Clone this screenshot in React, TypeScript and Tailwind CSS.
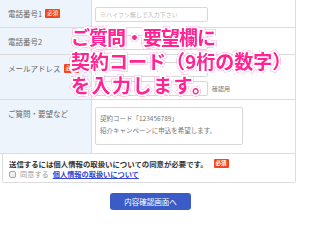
const font = { fontFamily: '"Noto Sans CJK JP", "Noto Sans", sans-serif' };

function Badge() {
  return (
    <span className="inline-flex h-[9px] items-center rounded-[1px] bg-[#f0451e] px-[2px] text-[5.5px] leading-none text-white">
      必須
    </span>
  );
}

function Row({ label, badge, h, children }: { label: string; badge?: boolean; h: string; children?: React.ReactNode }) {
  return (
    <div className={`flex border-b border-[#dcdcdc] ${h}`}>
      <div className="w-[92px] shrink-0 border-r border-[#dcdcdc] bg-[#eef4fb] pl-[8px] pt-[9px]">
        <div className="flex items-center gap-[3px] text-[7.5px] leading-[9px] text-[#666]">
          <span>{label}</span>
          {badge && <Badge />}
        </div>
      </div>
      <div className="flex-1 pl-[3px] pt-[7px]">{children}</div>
    </div>
  );
}

export default function App() {
  return (
    <div className="relative h-[220px] w-[300px] overflow-hidden bg-white" style={font}>
      <div className="w-[296px] border-r border-[#dcdcdc]">
        <Row label="電話番号1" badge h="h-[28px]">
          <div className="flex h-[15px] w-[113px] items-center rounded-[2px] border border-[#d8d8d8] pl-[4px] text-[6px] text-[#bbb]">
            ※ハイフン無しで入力下さい
          </div>
        </Row>
        <Row label="電話番号2" h="h-[27px]">
          <div className="h-[15px] w-[113px] rounded-[2px] border border-[#d8d8d8]" />
        </Row>
        <Row label="メールアドレス" badge h="h-[45px]">
          <div className="flex flex-col gap-[4px]">
            <div className="h-[15px] w-[113px] rounded-[2px] border border-[#d8d8d8]" />
            <div className="flex items-center gap-[4px]">
              <div className="h-[15px] w-[113px] rounded-[2px] border border-[#d8d8d8]" />
              <span className="text-[6px] text-[#777]">確認用</span>
            </div>
          </div>
        </Row>
        <Row label="ご質問・要望など" h="h-[54px]">
          <div className="h-[38px] w-[148px] rounded-[2px] border border-[#d8d8d8] pl-[4px] pt-[4px] text-[6.5px] leading-[12px] text-[#777]">
            <div>契約コード「123456789」</div>
            <div>紹介キャンペーンに申込を希望します。</div>
          </div>
        </Row>
      </div>
      <div className="ml-[2px] h-[29px] w-[294px] rounded-b-[2px] border border-t-0 border-[#dcdcdc] pl-[6px] pt-[4px]">
        <div className="flex items-center gap-[6px] text-[7.4px] font-bold leading-[11px] text-[#333]">
          <span>送信するには個人情報の取扱いについての同意が必要です。</span>
          <Badge />
        </div>
        <div className="flex items-center gap-[4px] text-[7.2px] leading-[11px]">
          <span className="h-[7px] w-[7px] rounded-[2px] border border-[#aaa] bg-[#eee]" />
          <span className="text-[#999]">同意する</span>
          <span className="font-bold text-[#3446d4] underline">個人情報の取扱いについて</span>
        </div>
      </div>
      <div className="mt-[10px] flex justify-center">
        <button className="ml-[1px] h-[17px] w-[81px] rounded-[3px] bg-[#3b5cc6] text-[7.5px] text-white">
          内容確認画面へ
        </button>
      </div>
      <div className="absolute left-[71px] top-[25px] text-[19px] font-bold leading-[24px] text-[#ff2393] [-webkit-text-stroke:4px_#fff] [paint-order:stroke_fill] drop-shadow-[0_0_0.7px_#ff2393]">
        <div className="tracking-[-1px]">ご質問・要望欄に</div>
        <div>契約コード（9桁の数字）</div>
        <div className="tracking-[1.5px]">を入力します。</div>
      </div>
    </div>
  );
}
